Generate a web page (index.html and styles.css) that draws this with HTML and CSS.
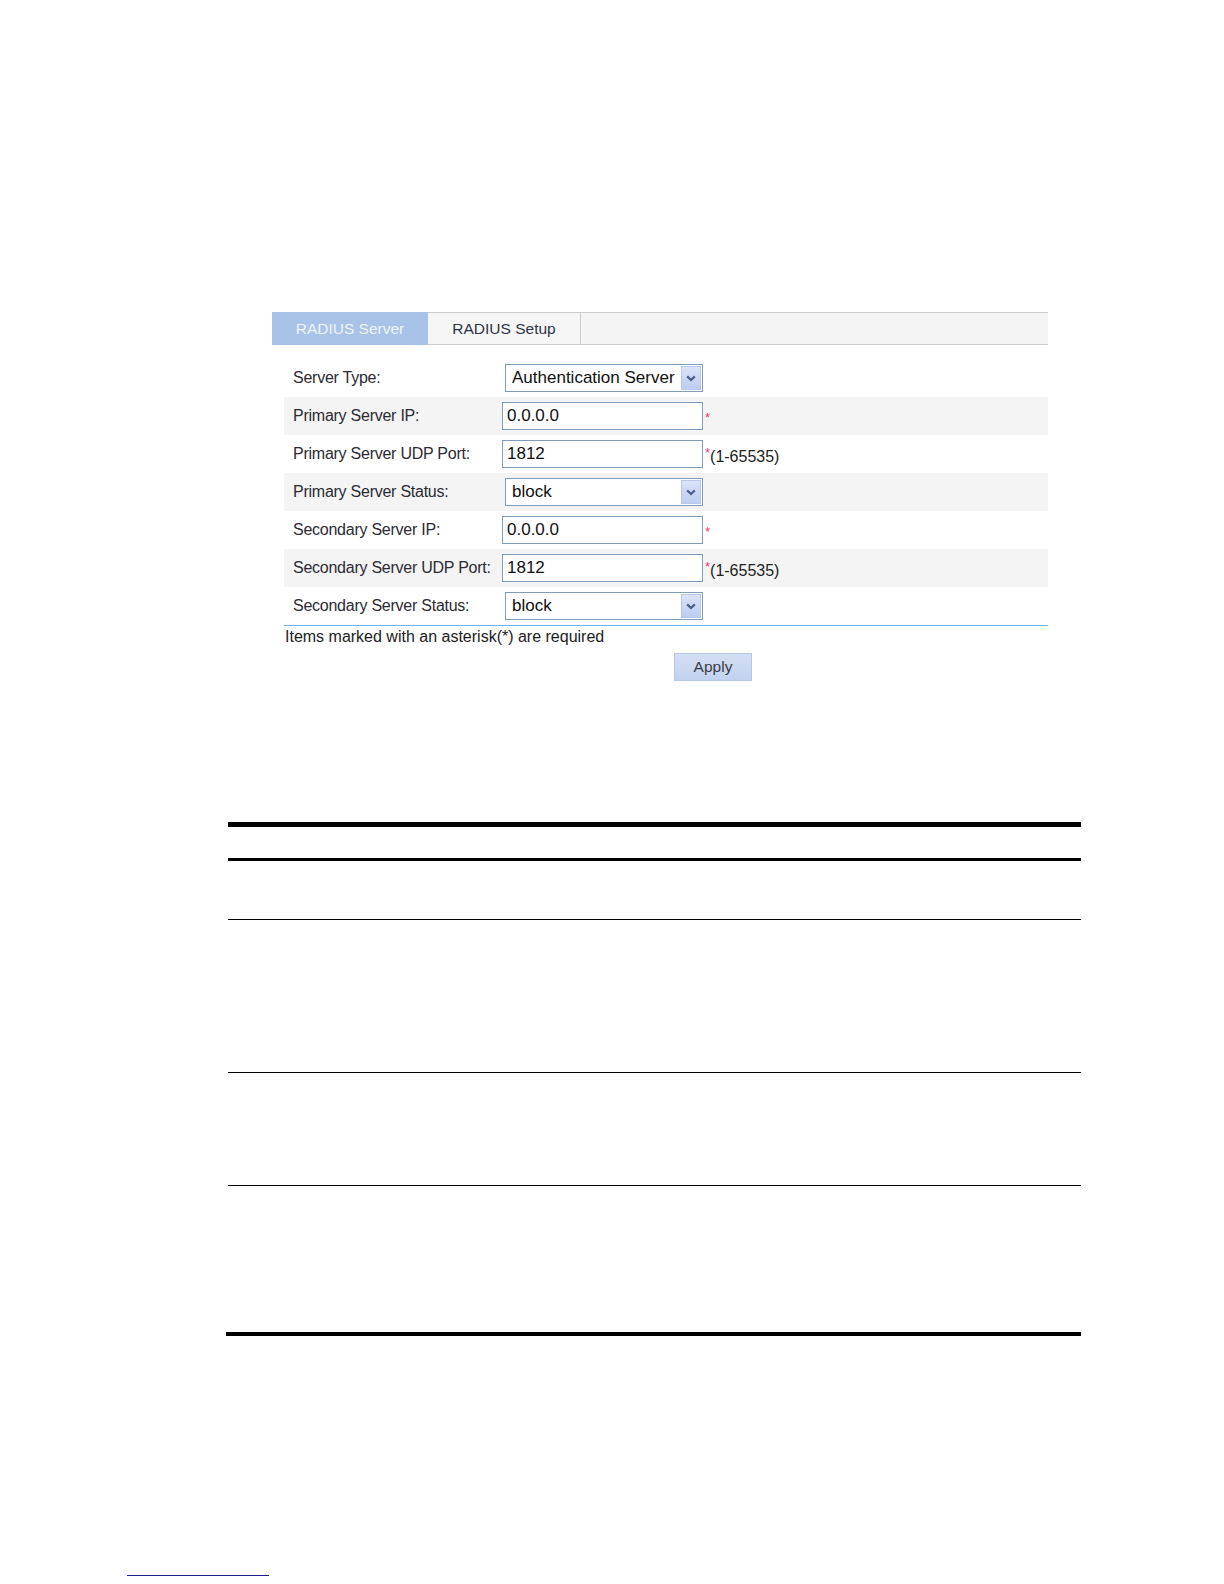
FILE: index.html
```html
<!DOCTYPE html>
<html>
<head>
<meta charset="utf-8">
<title>RADIUS Server</title>
<link rel="stylesheet" href="styles.css">
</head>
<body>
<div class="page">
  <div class="figure">
    <div class="tabs">
      <div class="tab active">RADIUS Server</div>
      <div class="tab">RADIUS Setup</div>
    </div>
    <div class="form">
      <div class="rows">
        <div class="row">
          <div class="label">Server Type:</div>
          <div class="select"><span>Authentication Server</span><span class="arrow"><svg width="10" height="7" viewBox="0 0 10 7"><path d="M1.2 1.4 L5 5 L8.8 1.4" fill="none" stroke="#4a5e8a" stroke-width="2.2"/></svg></span></div>
        </div>
        <div class="row alt">
          <div class="label">Primary Server IP:</div>
          <div class="field">0.0.0.0</div>
          <span class="req solo">*</span>
        </div>
        <div class="row">
          <div class="label">Primary Server UDP Port:</div>
          <div class="field">1812</div>
          <span class="suffix"><span class="req">*</span><span class="hint">(1-65535)</span></span>
        </div>
        <div class="row alt">
          <div class="label">Primary Server Status:</div>
          <div class="select"><span>block</span><span class="arrow"><svg width="10" height="7" viewBox="0 0 10 7"><path d="M1.2 1.4 L5 5 L8.8 1.4" fill="none" stroke="#4a5e8a" stroke-width="2.2"/></svg></span></div>
        </div>
        <div class="row">
          <div class="label">Secondary Server IP:</div>
          <div class="field">0.0.0.0</div>
          <span class="req solo">*</span>
        </div>
        <div class="row alt">
          <div class="label">Secondary Server UDP Port:</div>
          <div class="field">1812</div>
          <span class="suffix"><span class="req">*</span><span class="hint">(1-65535)</span></span>
        </div>
        <div class="row">
          <div class="label">Secondary Server Status:</div>
          <div class="select"><span>block</span><span class="arrow"><svg width="10" height="7" viewBox="0 0 10 7"><path d="M1.2 1.4 L5 5 L8.8 1.4" fill="none" stroke="#4a5e8a" stroke-width="2.2"/></svg></span></div>
        </div>
      </div>
      <div class="rule"></div>
      <div class="note">Items marked with an asterisk(*) are required</div>
      <div class="actions"><div class="btn">Apply</div></div>
    </div>
  </div>

  <div class="tbl">
    <div class="thead"></div>
    <div class="trow r1"></div>
    <div class="trow r2"></div>
    <div class="trow r3"></div>
    <div class="trow r4"></div>
    <div class="tend"></div>
  </div>

  <div class="foot"></div>
</div>
</body>
</html>
```

FILE: styles.css
```css
body {
  margin: 0;
  background: #fff;
  font-family: "Liberation Sans", Arial, sans-serif;
}

.page {
  width: 1224px;
  padding-top: 312px;
}

.figure {
  margin-left: 272px;
  width: 776px;
}

.tabs {
  display: flex;
  height: 33px;
  box-sizing: border-box;
  border-top: 1px solid #cbcbcb;
  border-bottom: 1px solid #cbcbcb;
  background: #f4f4f4;
}

.tab {
  width: 153px;
  box-sizing: border-box;
  border-right: 1px solid #cbcbcb;
  display: flex;
  align-items: center;
  justify-content: center;
  font-size: 15.5px;
  color: #2f3542;
  background: #f6f6f6;
}

.tab.active {
  width: 156px;
  margin: -1px 0;
  border-right: none;
  background: #a8c3e7;
  color: #eef3fb;
}

.form {
  margin-left: 12px;
  padding-top: 14px;
}

.row {
  display: flex;
  align-items: center;
  height: 38px;
  padding-left: 9px;
}

.row.alt {
  background: #f4f4f4;
}

.label {
  flex: none;
  width: 209px;
  font-size: 16px;
  letter-spacing: -0.25px;
  color: #2c2b33;
}

.field {
  flex: none;
  width: 201px;
  height: 28px;
  box-sizing: border-box;
  border: 1px solid #7f9db9;
  background: #fff;
  padding-left: 4px;
  font-size: 17px;
  line-height: 26px;
  color: #111;
}

.select {
  flex: none;
  margin-left: 3px;
  width: 198px;
  height: 28px;
  box-sizing: border-box;
  border: 1px solid #7f9db9;
  background: #fff;
  display: flex;
  align-items: center;
  justify-content: space-between;
  padding: 0 1px 0 6px;
  font-size: 17px;
  color: #111;
}

.arrow {
  width: 20px;
  height: 24px;
  box-sizing: border-box;
  border: 1px solid #b8c8ec;
  background: linear-gradient(#d9e3f9, #bccdf2);
  display: flex;
  align-items: center;
  justify-content: center;
}

.req {
  color: #ec3b6c;
  font-size: 13px;
}

.req.solo {
  margin-left: 2px;
  margin-top: 2px;
}

.suffix {
  display: flex;
  align-items: flex-start;
  margin-left: 2px;
  margin-top: 4px;
}

.suffix .req {
  line-height: 12px;
}

.hint {
  font-size: 16px;
  line-height: 18px;
  color: #222;
  margin-top: 1px;
}

.rule {
  height: 1px;
  background: #6fb5ea;
}

.note {
  margin-top: 1px;
  padding-left: 1px;
  font-size: 16px;
  line-height: 20px;
  color: #222;
}

.actions {
  margin-top: 6px;
  padding-left: 390px;
}

.btn {
  width: 78px;
  height: 28px;
  box-sizing: border-box;
  border: 1px solid #b6c7e3;
  background: linear-gradient(#d3dff4, #c2d2ee);
  display: flex;
  align-items: center;
  justify-content: center;
  font-size: 15.5px;
  color: #3a3d45;
}

.tbl {
  margin-left: 228px;
  width: 853px;
  margin-top: 141px;
}

.thead {
  height: 31px;
  border-top: 5px solid #000;
  border-bottom: 3px solid #000;
}

.trow {
  border-bottom: 1px solid #000;
}

.r1 { height: 58px; }
.r2 { height: 152px; }
.r3 { height: 112px; }
.r4 { height: 146px; border-bottom: none; }

.tend {
  height: 4px;
  margin-left: -2px;
  background: #000;
}

.foot {
  margin-top: 239px;
  margin-left: 127px;
  width: 142px;
  height: 1px;
  background: #1d1d8c;
}
```
